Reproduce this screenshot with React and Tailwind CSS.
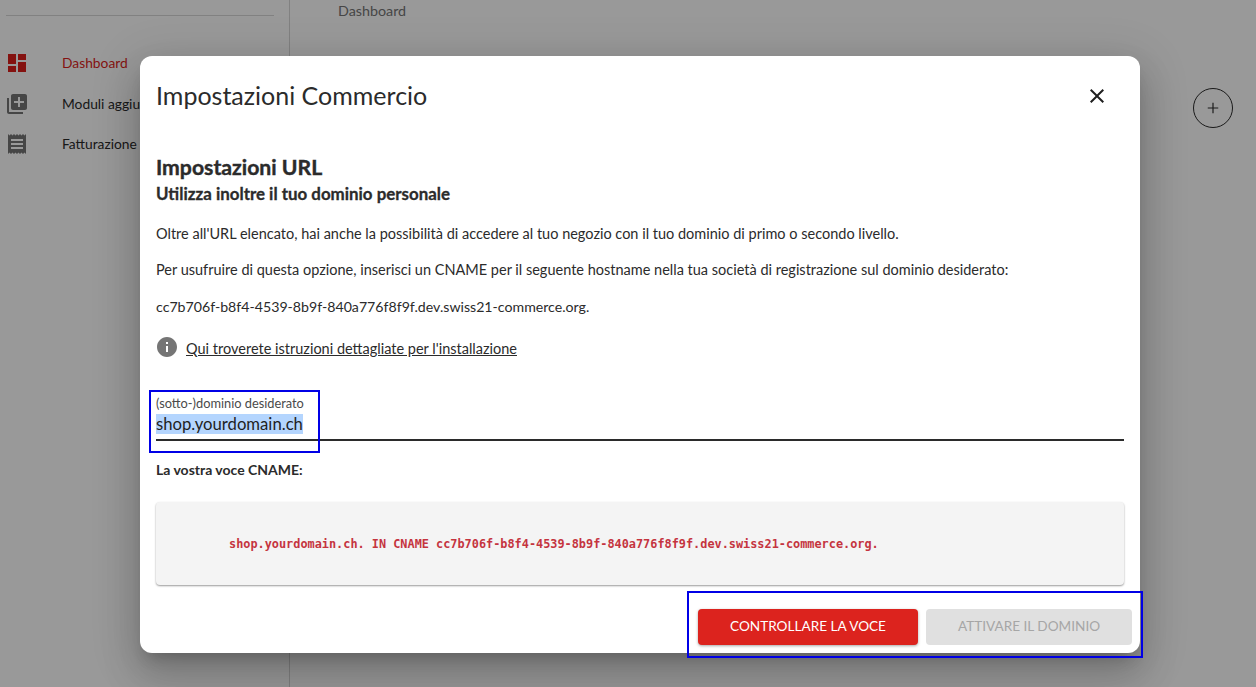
import React from "react";

const MenuItem = ({ d, label, active }) => (
  <div className="flex items-center h-10">
    <svg viewBox="0 0 24 24" className={`w-6 h-6 ml-[5px] shrink-0 ${active ? "fill-[#dc1f1c]" : "fill-[#757575]"}`}>
      <path d={d} />
    </svg>
    <span className={`ml-[33px] text-[13.8px] whitespace-nowrap ${active ? "text-[#dc1f1c]" : "text-[#2b2b2b]"}`}>{label}</span>
  </div>
);

const App = () => {
  return (
    <div className="relative w-full h-[687px] overflow-hidden bg-white font-['Lato',sans-serif]">
      {/* page behind the dialog */}
      <div className="flex h-full">
        <aside className="w-[290px] h-full border-r border-[#d8d8d8] shrink-0">
          <div className="ml-[6px] mr-[15px] mt-[15px] border-t border-[#d8d8d8]" />
          <div className="mt-[27px]">
            <MenuItem active label="Dashboard" d="M3 13h8V3H3v10zm0 8h8v-6H3v6zm10 0h8V11h-8v10zm0-18v6h8V3h-8z" />
            <div className="mt-[1px]">
              <MenuItem label="Moduli aggiuntivi" d="M4 6H2v14c0 1.1.9 2 2 2h14v-2H4V6zm16-4H8c-1.1 0-2 .9-2 2v12c0 1.1.9 2 2 2h12c1.1 0 2-.9 2-2V4c0-1.1-.9-2-2-2zm-1 9h-4v4h-2v-4H9V9h4V5h2v4h4v2z" />
            </div>
            <MenuItem label="Fatturazione" d="M18 17H6v-2h12v2zm0-4H6v-2h12v2zm0-4H6V7h12v2zM3 22l1.5-1.5L6 22l1.5-1.5L9 22l1.5-1.5L12 22l1.5-1.5L15 22l1.5-1.5L18 22l1.5-1.5L21 22V2l-1.5 1.5L18 2l-1.5 1.5L15 2l-1.5 1.5L12 2l-1.5 1.5L9 2 7.5 3.5 6 2 4.5 3.5 3 2v20z" />
          </div>
        </aside>
        <main className="flex-1 relative">
          <div className="ml-[48px] text-[14.3px] text-[#757575]">Dashboard</div>
          <button className="absolute left-[903px] top-[88px] w-10 h-10 rounded-full border border-[#2b2b2b] flex items-center justify-center">
            <svg viewBox="0 0 24 24" className="w-[14px] h-[14px] fill-[#2b2b2b]"><path d="M11 3h2v8h8v2h-8v8h-2v-8H3v-2h8z" /></svg>
          </button>
        </main>
      </div>

      {/* backdrop + dialog */}
      <div className="absolute inset-0 bg-black/40 flex items-start pt-[56px] pl-[140px]">
        <div className="relative w-[1000px] h-[597px] bg-white rounded-xl shadow-[0_11px_15px_-7px_rgba(0,0,0,0.2),0_24px_38px_3px_rgba(0,0,0,0.14),0_9px_46px_8px_rgba(0,0,0,0.12)] px-4 text-[#2b2b2b]">
          <div className="flex items-center justify-between h-[80px]">
            <h2 className="text-[25px] font-normal">Impostazioni Commercio</h2>
            <svg viewBox="0 0 24 24" className="w-6 h-6 mr-[15px] fill-[#1f1f1f]">
              <path d="M19 6.41L17.59 5 12 10.59 6.41 5 5 6.41 10.59 12 5 17.59 6.41 19 12 13.41 17.59 19 19 17.59 13.41 12z" />
            </svg>
          </div>

          <h3 className="mt-[16px] text-[21.2px] leading-[30px] font-bold [-webkit-text-stroke:0.4px_#2b2b2b]">Impostazioni URL</h3>
          <h4 className="mt-[1px] text-[16.9px] leading-[22px] font-bold [-webkit-text-stroke:0.3px_#2b2b2b]">Utilizza inoltre il tuo dominio personale</h4>
          <p className="mt-[19px] text-[14.5px] leading-[20px]">
            Oltre all'URL elencato, hai anche la possibilità di accedere al tuo negozio con il tuo dominio di primo o secondo livello.
          </p>
          <p className="mt-[16px] text-[14.5px] leading-[20px]">
            Per usufruire di questa opzione, inserisci un CNAME per il seguente hostname nella tua società di registrazione sul dominio desiderato:
          </p>
          <p className="mt-[17px] text-[14.17px] leading-[20px]">cc7b706f-b8f4-4539-8b9f-840a776f8f9f.dev.swiss21-commerce.org.</p>

          <div className="flex items-center mt-[18px] h-6">
            <svg viewBox="0 0 24 24" className="w-6 h-6 -ml-[1px] fill-[#757575]">
              <path d="M12 2C6.48 2 2 6.48 2 12s4.48 10 10 10 10-4.48 10-10S17.52 2 12 2zm1 15h-2v-6h2v6zm0-8h-2V7h2v2z" />
            </svg>
            <a className="ml-[7px] mt-[3px] text-[14.5px] underline">Qui troverete istruzioni dettagliate per l'installazione</a>
          </div>

          <div className="mt-[27px] border-b-2 border-[#2b2b2b] h-[55px]">
            <div className="text-[12.8px] leading-[16px] text-[#4a4a4a] pt-[9px]">(sotto-)dominio desiderato</div>
            <div className="mt-[3px] text-[16.7px] leading-[20px] text-[#1f1f1f]">
              <span className="bg-[#b4d5fe]">shop.yourdomain.ch</span>
            </div>
          </div>

          <div className="mt-[19px] text-sm leading-[20px] font-bold">La vostra voce CNAME:</div>

          <div className="mt-[22px] h-[83px] bg-[#f4f4f4] rounded-[4px] shadow-[0_1px_2px_rgba(0,0,0,0.4)] flex items-center pl-[73px] pt-[2px]">
            <code className="font-['DejaVu_Sans_Mono',monospace] font-bold text-[11.86px] text-[#c5343f] whitespace-nowrap">
              shop.yourdomain.ch. IN CNAME cc7b706f-b8f4-4539-8b9f-840a776f8f9f.dev.swiss21-commerce.org.
            </code>
          </div>

          <div className="flex justify-end gap-2 mt-[24px] -mr-2">
            <button className="w-[220px] h-9 pb-[1px] rounded-[4px] bg-[#dc231e] text-white text-[13.6px] shadow-[0_1px_3px_rgba(0,0,0,0.35)]">CONTROLLARE LA VOCE</button>
            <button className="w-[206px] h-9 pb-[1px] rounded-[4px] bg-[#e0e0e0] text-[#a6a6a6] text-[13.6px]">ATTIVARE IL DOMINIO</button>
          </div>
        </div>
      </div>

      {/* blue annotation boxes */}
      <div className="absolute left-[149px] top-[390px] w-[171px] h-[63px] border-2 border-[#0000e6]" />
      <div className="absolute left-[687px] top-[591px] w-[456px] h-[67px] border-2 border-[#0000e6]" />
    </div>
  );
};

export default App;
